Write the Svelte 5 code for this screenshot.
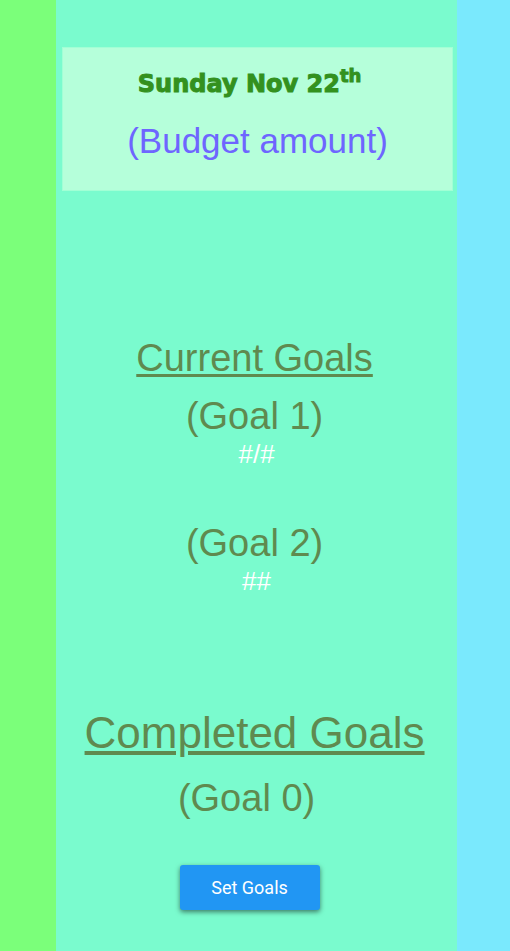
<script>
  const currentGoals = [
    { name: '(Goal 1)', progress: '#/#' },
    { name: '(Goal 2)', progress: '##' }
  ];
  const completedGoals = ['(Goal 0)'];
</script>

<div class="page">
  <main>
    <header>
      <h1>Sunday Nov 22<sup>th</sup></h1>
      <p class="budget">(Budget amount)</p>
    </header>

    <section class="current">
      <h2>Current Goals</h2>
      <ul>
        {#each currentGoals as goal}
          <li>
            <span class="goal">{goal.name}</span>
            <span class="progress">{goal.progress}</span>
          </li>
        {/each}
      </ul>
    </section>

    <section class="completed">
      <h2>Completed Goals</h2>
      <ul>
        {#each completedGoals as goal}
          <li><span class="goal">{goal}</span></li>
        {/each}
      </ul>
    </section>

    <div class="actions">
      <button type="button">Set Goals</button>
    </div>
  </main>
</div>

<style>
  .page {
    display: grid;
    grid-template-columns: 11% minmax(0, 1fr) 53px;
    min-height: 100vh;
    background: linear-gradient(90deg, #7bff7a 50%, #7ae9fd 50%);
    font-family: 'Liberation Sans', Arial, sans-serif;
    text-align: center;
    color: #5f8a4f;
  }

  main {
    grid-column: 2;
    box-sizing: border-box;
    padding: 47px 4px 40px 6px;
    background: #7afbce;
  }

  h1,
  h2,
  p,
  ul {
    margin: 0;
    padding: 0;
    font-weight: 400;
  }

  ul {
    list-style: none;
  }

  header {
    box-sizing: border-box;
    padding: 20px 0 27px;
    border: 1px solid #a1ffd5;
    background: #b5ffda;
  }

  h1 {
    padding-right: 16px;
    font-family: 'Arial Black', 'DejaVu Sans', sans-serif;
    font-size: 24px;
    font-weight: 700;
    line-height: 32px;
    -webkit-text-stroke: 1px #33911e;
    color: #33911e;
  }

  sup {
    font-size: 18px;
    line-height: 0;
    vertical-align: 10px;
  }

  .budget {
    margin-top: 19px;
    font-size: 35px;
    line-height: 44px;
    color: #6e66ff;
  }

  section {
    padding-right: 6px;
  }

  .current {
    margin-top: 145px;
  }

  h2 {
    font-size: 38px;
    line-height: 44px;
    text-decoration: underline 3px;
    text-underline-offset: 3px;
  }

  .current ul {
    display: grid;
    gap: 51px;
    margin-top: 14px;
  }

  .goal,
  .progress {
    display: block;
  }

  .goal {
    font-size: 38px;
    line-height: 44px;
  }

  .progress {
    padding-left: 4px;
    font-size: 26px;
    line-height: 32px;
    color: #fff;
  }

  .completed {
    margin-top: 111px;
  }

  .completed h2 {
    font-size: 44px;
    line-height: 50px;
    text-decoration-thickness: 4px;
  }

  .completed ul {
    margin-top: 18px;
    padding-right: 16px;
  }

  .actions {
    margin-top: 45px;
    padding-right: 16px;
  }

  button {
    width: 140px;
    height: 45px;
    padding: 0;
    border: 0;
    border-radius: 3px;
    background: #2196f3;
    box-shadow: 0 2px 5px rgba(0, 0, 0, 0.5);
    font: 400 18px Roboto, sans-serif;
    color: #fff;
    cursor: pointer;
  }
</style>
